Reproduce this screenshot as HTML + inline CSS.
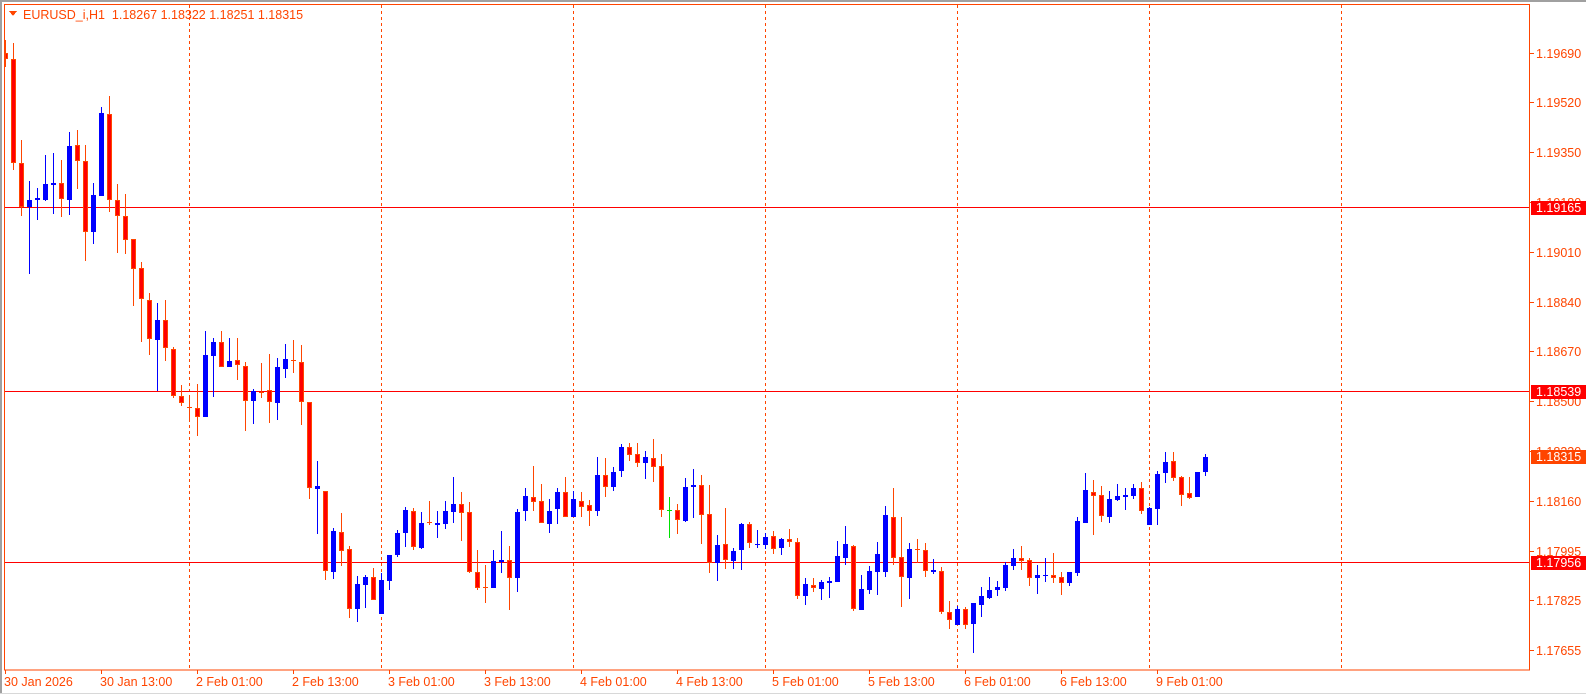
<!DOCTYPE html>
<html><head><meta charset="utf-8"><style>
html,body{margin:0;padding:0;background:#fff;width:1586px;height:696px;overflow:hidden}
svg{display:block}
text{font-family:"Liberation Sans",sans-serif;font-size:12.5px}
</style></head><body>
<svg id="s" width="1586" height="696" xmlns="http://www.w3.org/2000/svg" shape-rendering="crispEdges">
<rect x="0" y="0" width="1586" height="696" fill="#fff"/>
<rect x="0" y="0" width="1586" height="2" fill="#a0a0a0"/>
<rect x="0" y="0" width="2" height="694" fill="#a0a0a0"/>
<rect x="0" y="693" width="1586" height="1" fill="#d8d8d8"/>
<g id="grid"></g>
<rect x="4.5" y="4.5" width="1525" height="665.5" fill="none" stroke="#ff4500" stroke-width="1"/>
<g id="hl"></g>
<g id="candles"></g>
<g id="axis"></g>
<polygon points="9,11 17,11 13,16" fill="#ff4500"/>
<text x="23" y="19" fill="#ff4500">EURUSD_i,H1&#160;&#160;1.18267 1.18322 1.18251 1.18315</text>
</svg>
<script>
var NS="http://www.w3.org/2000/svg";
function el(p,t,a,txt){var e=document.createElementNS(NS,t);for(var k in a)e.setAttribute(k,a[k]);if(txt!==undefined)e.textContent=txt;document.getElementById(p).appendChild(e);return e;}
// vertical dashed grid
[189,381,573,765,957,1149,1341].forEach(function(x){el('grid','line',{x1:x+.5,y1:5,x2:x+.5,y2:670,stroke:'#ff4500','stroke-dasharray':'3,3'});});
// horizontal lines
[207,391,562].forEach(function(y){el('hl','rect',{x:5,y:y,width:1524,height:1,fill:'#ff0000'});});
var z1=[[60,77,25,97,'r'],[76,348,35,365,'r'],[348,463,288,485,'r'],[444,463,395,637,'b'],[438,443,413,496,'b'],[402,444,327,446,'b'],[400,404,320,480,'b'],[400,440,340,488,'r'],[303,443,267,483,'b'],[301,341,261,415,'r'],[342,527,301,603,'r'],[431,527,400,558,'b'],[217,433,200,433,'b'],[220,443,172,475,'r'],[444,485,402,582,'r'],[486,548,429,584,'r'],[546,624,546,720,'r'],[622,702,606,815,'r'],[706,807,687,848,'r'],[758,809,713,943,'b'],[758,830,706,864,'r'],[834,956,828,962,'r'],[956,974,928,982,'r'],[984,987,960,1020,'r'],[986,1010,925,1060,'r'],[849,1010,787,1010,'b'],[815,851,805,958,'b'],[814,880,787,880,'r'],[865,880,805,880,'b'],[862,874,805,914,'r'],[876,968,868,1047,'r'],[942,968,938,1029,'b'],[944,948,870,962,'r'],[941,970,847,1026,'r'],[881,974,857,1018,'b'],[860,885,821,908,'b'],[861,864,810,895,'r'],[866,972,823,1031,'r'],[972,1197,972,1225,'r']];
var z2=[[258,266,183,401,'b'],[273,514,273,540,'r'],[393,515,384,536,'b'],[397,452,339,497,'r'],[447,626,438,653,'r'],[552,626,528,665,'b'],[531,554,525,623,'b'],[531,599,504,599,'r'],[540,641,519,641,'b'],[465,542,465,569,'b'],[399,465,390,470,'b'],[330,398,321,440,'b'],[333,440,324,449,'r'],[369,444,336,446,'b'],[366,369,303,375,'r'],[369,374,333,413,'b'],[333,371,303,386,'b'],[312,335,231,368,'b'],[313,340,276,422,'r'],[337,515,306,520,'r'],[517,563,450,569,'r'],[561,563,494,608,'r'],[483,563,450,563,'b'],[480,486,393,518,'b'],[481,533,438,630,'r'],[336,533,327,575,'b'],[289,332,264,362,'b'],[292,307,198,332,'r'],[303,368,252,368,'r'],[333,371,297,398,'b'],[276,326,264,371,'b'],[276,350,231,350,'r'],[297,350,273,350,'b'],[303,320,276,350,'r'],[316,332,300,377,'r'],[225,332,171,347,'b'],[225,260,174,290,'r'],[216,260,201,272,'b'],[141,212,132,230,'b'],[141,164,129,182,'r'],[162,188,129,200,'r'],[171,188,153,236,'b'],[174,200,117,245,'r'],[198,329,162,350,'r'],[330,332,291,413,'g'],[330,359,312,401,'r'],[261,362,234,365,'b'],[256,260,207,353,'b']];
var z3=[[192,281,162,368,'r'],[277,422,192,452,'r'],[369,422,339,476,'b'],[366,415,261,440,'r'],[387,416,378,440,'b'],[309,386,306,443,'b'],[309,365,303,380,'r'],[366,369,324,380,'b'],[345,371,333,383,'b'],[342,383,327,395,'r'],[353,380,350,398,'b'],[351,362,321,377,'r'],[360,521,348,530,'r'],[486,521,468,548,'b'],[489,497,468,509,'r'],[480,500,474,533,'b'],[477,482,465,527,'b'],[402,479,357,479,'b'],[366,407,315,428,'b'],[372,560,369,566,'r'],[501,563,459,563,'b'],[447,503,432,515,'b'],[396,449,360,518,'b'],[282,449,255,464,'b'],[288,407,201,428,'r'],[405,464,288,554,'r'],[381,467,363,530,'b'],[381,386,351,422,'r'],[384,446,363,464,'r'],[444,449,411,455,'b'],[447,569,435,575,'r'],[567,593,534,617,'r'],[558,605,549,605,'b'],[558,605,552,617,'r'],[542,602,540,690,'b'],[522,548,495,584,'b'],[504,527,465,530,'b'],[495,503,477,521,'b'],[428,497,420,506,'b'],[408,431,381,443,'b'],[408,418,372,443,'r'],[414,467,408,491,'r'],[459,467,428,515,'b'],[459,462,408,479,'b'],[459,467,393,482,'r'],[465,482,450,518,'r'],[450,482,450,491,'b'],[300,452,288,461,'b'],[207,305,156,305,'b'],[213,224,177,341,'r'],[222,284,195,302,'r'],[234,287,210,305,'b'],[225,236,189,239,'b'],[221,227,201,266,'b'],[201,224,189,233,'b'],[201,269,183,278,'r'],[261,311,258,311,'b'],[159,263,150,311,'b'],[123,158,96,185,'b'],[120,173,96,179,'r'],[168,221,165,254,'r'],[216,230,168,233,'r'],[153,227,153,227,'b'],[108,155,102,167,'b']];
var all=[];
z1.forEach(function(c){all.push(c.slice(0,4).map(function(v){return 30+v*0.383;}).concat(c[4]));});
z2.forEach(function(c){all.push(c.slice(0,4).map(function(v){return 400+v/3;}).concat(c[4]));});
z3.forEach(function(c){all.push(c.slice(0,4).map(function(v){return 420+v/2.958;}).concat(c[4]));});
all.forEach(function(c,i){
 var cx=5+8*i, bt=Math.round(c[0]), bb=Math.round(c[1]), wt=Math.round(c[2]), wb=Math.round(c[3]), t=c[4];
 if(bb-bt<1)bb=bt+1;
 var col=t=='b'?'#0000ff':(t=='g'?'#00e000':'#ff4500');
 el('candles','rect',{x:cx,y:wt,width:1,height:Math.max(1,wb-wt),fill:col});
 var x0=Math.max(5,cx-2), w=cx+3-x0;
 if(t=='b'){el('candles','rect',{x:x0,y:bt,width:w,height:bb-bt,fill:'#0000ff'});}
 else if(t=='g'){el('candles','rect',{x:x0,y:bt,width:w,height:Math.max(1,bb-bt),fill:'#00e000'});}
 else{el('candles','rect',{x:x0,y:bt,width:w,height:bb-bt,fill:'#ff4500'});
  if(bb-bt>2)el('candles','rect',{x:x0+1,y:bt+1,width:w-2,height:bb-bt-2,fill:'#ff0000'});}
});
// price axis
var labs=["1.19690","1.19520","1.19350","1.19180","1.19010","1.18840","1.18670","1.18500","1.18330","1.18160","1.17995","1.17825","1.17655"];
labs.forEach(function(l,k){var y=Math.round(52.7+49.78*k);
 el('axis','rect',{x:1530,y:y,width:4,height:1,fill:'#ff4500'});
 el('axis','text',{x:1536,y:y+5,fill:'#ff4500'},l);});
[[207,'1.19165','#ff0000'],[391,'1.18539','#ff0000'],[456,'1.18315','#ff4500'],[562,'1.17956','#ff0000']].forEach(function(b){
 el('axis','rect',{x:1531,y:b[0]-6,width:55,height:14,fill:b[2]});
 el('axis','text',{x:1536,y:b[0]+5,fill:'#fff'},b[1]);});
// time axis
var tl=["30 Jan 2026","30 Jan 13:00","2 Feb 01:00","2 Feb 13:00","3 Feb 01:00","3 Feb 13:00","4 Feb 01:00","4 Feb 13:00","5 Feb 01:00","5 Feb 13:00","6 Feb 01:00","6 Feb 13:00","9 Feb 01:00"];
tl.forEach(function(l,k){var x=5+96*k;
 el('axis','rect',{x:x,y:670,width:1,height:4,fill:'#ff4500'});
 el('axis','text',{x:x-1,y:686,fill:'#ff4500'},l);});
</script>
</body></html>
